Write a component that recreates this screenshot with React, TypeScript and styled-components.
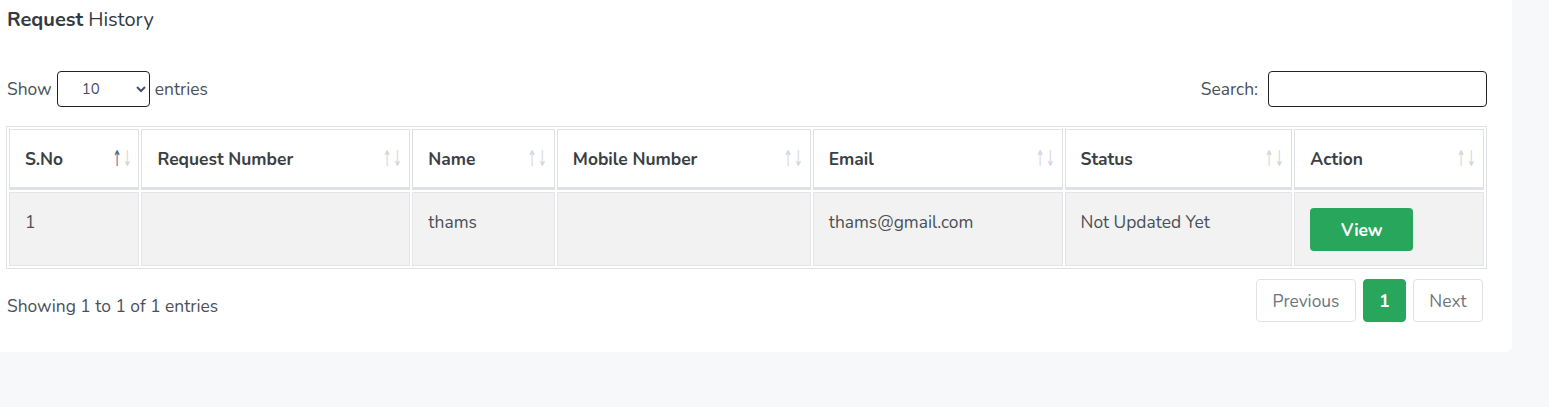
import React from "react";
import styled, { createGlobalStyle } from "styled-components";

const Global = createGlobalStyle`
  html, body { margin: 0; padding: 0; background: #f7f8fa; }
  body { font-family: "Nunito", "Open Sans", "Noto Sans", sans-serif; color: #495057; }
  * { box-sizing: border-box; }
`;

const Card = styled.div`
  width: 1512px;
  background: #ffffff;
  border-bottom-right-radius: 5px;
  box-shadow: 0 0 1px rgba(0,0,0,0.06);
  padding: 6px 25px 30px 6px;
`;

const Title = styled.h4`
  margin: 0 0 0 1px;
  font-size: 20px;
  line-height: 28px;
  font-weight: 400;
  color: #343a40;
  b { font-weight: 700; }
`;

const Controls = styled.div`
  display: flex;
  justify-content: space-between;
  align-items: center;
  margin-top: 37px;
  height: 36px;
  font-size: 17.4px;
  color: #495057;
`;

const Label = styled.label`
  display: flex;
  align-items: center;
  gap: 5px;
  margin-left: 1px;
`;

const Select = styled.select`
  width: 93px;
  height: 36px;
  border: 1px solid #222;
  border-radius: 4px;
  background: #fff;
  font: inherit;
  font-size: 15px;
  color: #4a4f6a;
  padding: 0 0 0 20px;
`;

const SearchInput = styled.input`
  width: 219px;
  height: 36px;
  border: 1px solid #222;
  border-radius: 4px;
  background: #fff;
  margin-left: 5px;
`;

const Table = styled.table`
  margin-top: 19px;
  width: 1481px;
  border: 1px solid #dee2e6;
  border-collapse: separate;
  border-spacing: 2px;
  font-size: 17.4px;
`;

const Th = styled.th<{ $w: number }>`
  width: ${(p) => p.$w}px;
  position: relative;
  text-align: left;
  font-weight: 700;
  color: #3b3f44;
  border: 1px solid #dee2e6;
  border-bottom-width: 3px;
  padding: 15px 30px 14px 15px;
  line-height: 28px;
  background: #fff;
`;

const Sort = styled.span`
  position: absolute;
  right: 7px;
  top: 50%;
  transform: translateY(-50%) scaleX(0.5);
  transform-origin: right center;
  display: flex;
  gap: 2px;
  font-family: "DejaVu Sans", sans-serif;
  font-size: 22px;
  line-height: 22px;
  font-weight: 400;
  white-space: nowrap;
`;

const Arrow = styled.span<{ $on?: boolean }>`
  display: block;
  color: ${(p) => (p.$on ? "#4d5e8f" : "#d2d5d9")};
`;

const Td = styled.td`
  border: 1px solid #e3e5e8;
  background: #f2f2f2;
  padding: 15px 15px 14px 15px;
  line-height: 28px;
  vertical-align: top;
  color: #495057;
  height: 74px;
`;

const ViewButton = styled.button`
  width: 103px;
  height: 43px;
  border: none;
  border-radius: 4px;
  background: #27a65c;
  color: #fff;
  font: inherit;
  font-size: 17.4px;
  font-weight: 700;
  cursor: pointer;
`;

const Footer = styled.div`
  display: flex;
  justify-content: space-between;
  align-items: center;
  margin-top: 10px;
  width: 1481px;
  font-size: 17.4px;
`;

const Info = styled.div`
  margin-left: 1px;
  padding-top: 11px;
`;

const Pager = styled.div`
  display: flex;
  gap: 7px;
  margin-right: 4px;
`;

const PageBtn = styled.button<{ $active?: boolean; $w: number }>`
  height: 43px;
  width: ${(p) => p.$w}px;
  border: 1px solid ${(p) => (p.$active ? "#27a65c" : "#dee2e6")};
  border-radius: 4px;
  background: ${(p) => (p.$active ? "#27a65c" : "#fff")};
  color: ${(p) => (p.$active ? "#fff" : "#6c757d")};
  font: inherit;
  font-size: 17.4px;
  font-weight: ${(p) => (p.$active ? 700 : 400)};
`;

const cols = [
  { t: "S.No", w: 130, on: true },
  { t: "Request Number", w: 268 },
  { t: "Name", w: 142 },
  { t: "Mobile Number", w: 253 },
  { t: "Email", w: 249 },
  { t: "Status", w: 227 },
  { t: "Action", w: 189 },
];

export default function App() {
  return (
    <>
      <Global />
      <Card>
        <Title>
          <b>Request</b> History
        </Title>
        <Controls>
          <Label>
            Show
            <Select defaultValue="10">
              <option>10</option>
              <option>25</option>
              <option>50</option>
              <option>100</option>
            </Select>
            entries
          </Label>
          <Label>
            Search:
            <SearchInput />
          </Label>
        </Controls>
        <Table>
          <thead>
            <tr>
              {cols.map((c) => (
                <Th key={c.t} $w={c.w}>
                  {c.t}
                  <Sort>
                    <Arrow $on={c.on}>↑</Arrow>
                    <Arrow>↓</Arrow>
                  </Sort>
                </Th>
              ))}
            </tr>
          </thead>
          <tbody>
            <tr>
              <Td>1</Td>
              <Td></Td>
              <Td>thams</Td>
              <Td></Td>
              <Td>thams@gmail.com</Td>
              <Td>Not Updated Yet</Td>
              <Td>
                <ViewButton>View</ViewButton>
              </Td>
            </tr>
          </tbody>
        </Table>
        <Footer>
          <Info>Showing 1 to 1 of 1 entries</Info>
          <Pager>
            <PageBtn $w={100}>Previous</PageBtn>
            <PageBtn $w={43} $active>
              1
            </PageBtn>
            <PageBtn $w={70}>Next</PageBtn>
          </Pager>
        </Footer>
      </Card>
    </>
  );
}
